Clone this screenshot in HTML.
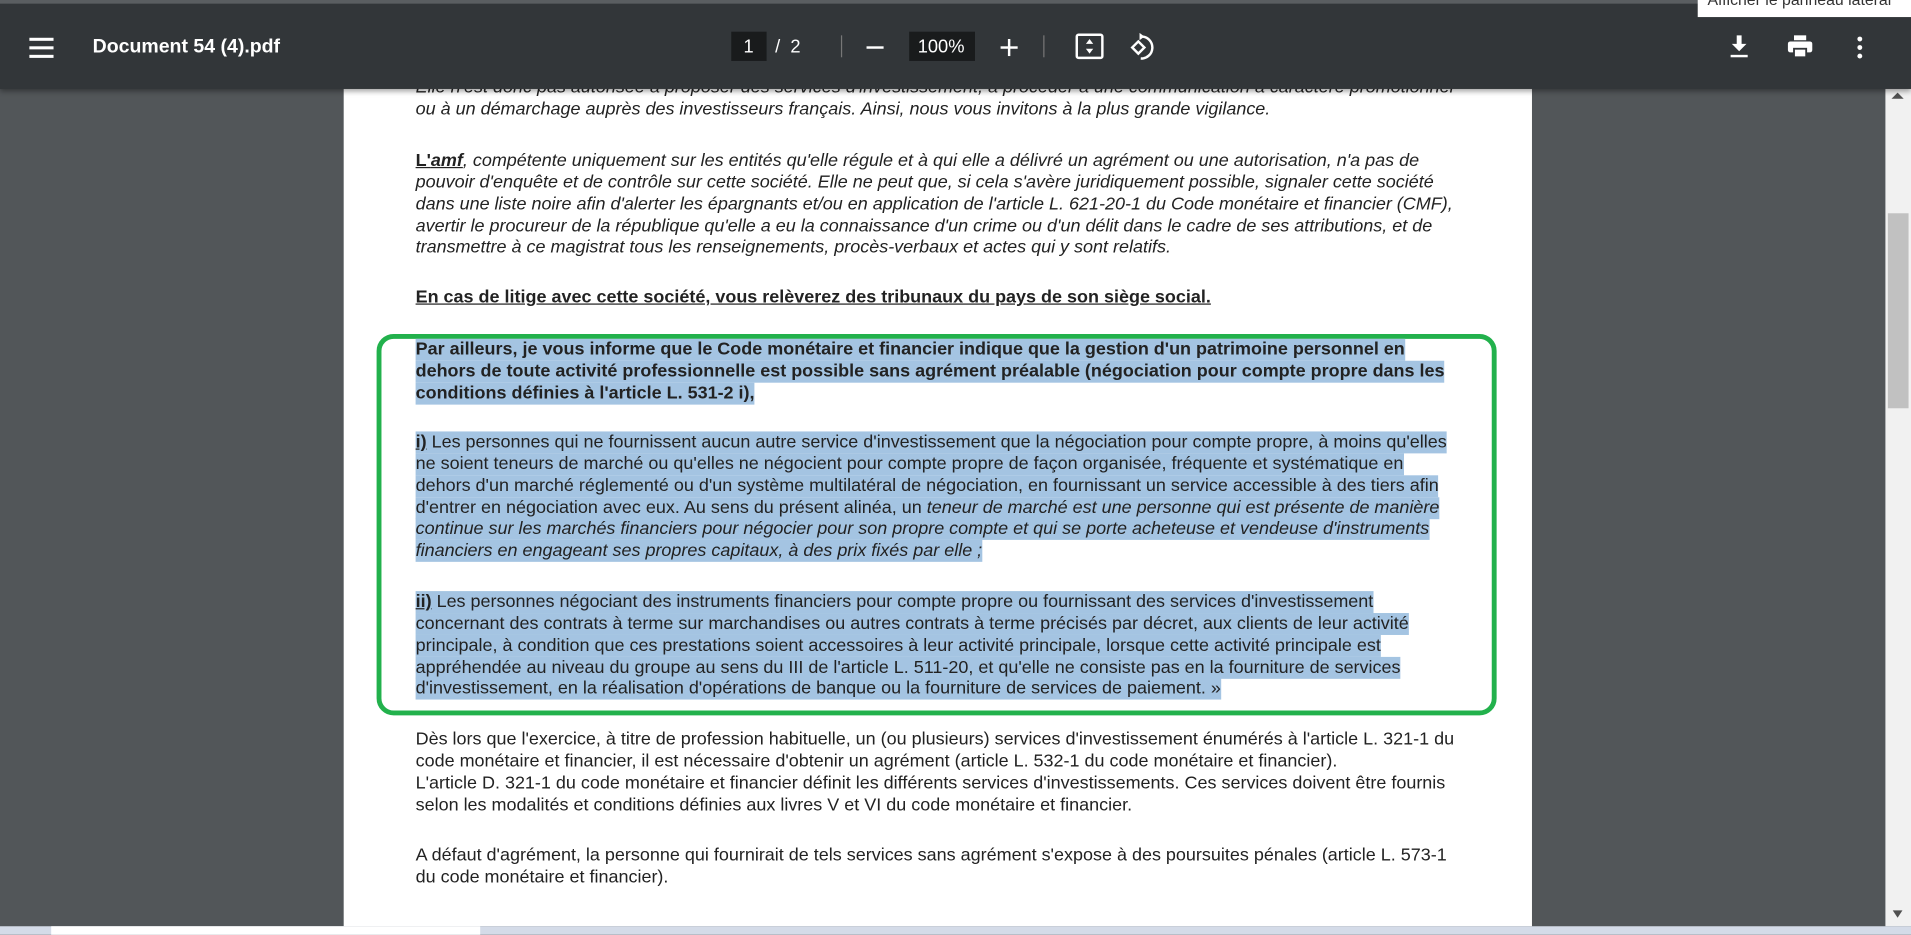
<!DOCTYPE html>
<html><head><meta charset="utf-8"><style>
html,body{margin:0;padding:0;width:1911px;height:935px;overflow:hidden;background:#525659}
#w{position:absolute;left:0;top:0;width:1568px;height:767px;transform:scale(1.21875);transform-origin:0 0;font-family:"Liberation Sans",Arial,sans-serif}
#tb{position:absolute;left:0;top:0;width:1568px;height:73px;background:#323639;box-shadow:0 2px 4px rgba(0,0,0,.35);z-index:5}
#tb .topline{position:absolute;left:0;top:0;width:1568px;height:3px;background:#5a5e61}
.t{position:absolute;color:#fff}
#page{position:absolute;left:282px;top:60px;width:975px;height:700px;background:#fff}
.txt{position:absolute;left:341px;font-size:14.75px;line-height:17.85px;color:#222;white-space:nowrap}
.txt div{height:17.85px}
.hl span{background:#a4c4e2;padding:1px 0}
i{font-style:italic}
b{font-weight:bold}
u{text-decoration:underline}
#green{position:absolute;left:309px;top:274px;width:911px;height:305px;border:4px solid #22b14c;border-radius:14px}
#sb{position:absolute;left:1547px;top:72px;width:21px;height:688px;background:#f1f1f1}
#thumb{position:absolute;left:1549px;top:175px;width:17px;height:160px;background:#c1c1c1}
#bot{position:absolute;left:0;top:760px;width:1568px;height:7px;background:#d4dbe8}
</style></head><body><div id="w">
<div id="page"></div>
<div class="txt" style="top:64px"><i><div>Elle n'est donc pas autorisée à proposer des services d'investissement, à procéder à une communication à caractère promotionnel</div><div>ou à un démarchage auprès des investisseurs français. Ainsi, nous vous invitons à la plus grande vigilance.</div></i></div>
<div class="txt" style="top:124px"><div><b><u>L'<i>amf</i></u></b><i>, co</i><i>mpétente uniquement sur les entités qu'elle régule et à qui elle a délivré un agrément ou une autorisation, n'a pas de</i></div><i><div>pouvoir d'enquête et de contrôle sur cette société. Elle ne peut que, si cela s'avère juridiquement possible, signaler cette société</div><div>dans une liste noire afin d'alerter les épargnants et/ou en application de l'article L. 621-20-1 du Code monétaire et financier (CMF),</div><div>avertir le procureur de la république qu'elle a eu la connaissance d'un crime ou d'un délit dans le cadre de ses attributions, et de</div><div>transmettre à ce magistrat tous les renseignements, procès-verbaux et actes qui y sont relatifs.</div></i></div>
<div class="txt" style="top:236px"><b><u>En cas de litige avec cette société, vous relèverez des tribunaux du pays de son siège social.</u></b></div>
<div id="green"></div>
<div class="txt hl" style="top:279px"><b><div><span>Par ailleurs, je vous informe que le Code monétaire et financier indique que la gestion d'un patrimoine personnel en</span></div><div><span>dehors de toute activité professionnelle est possible sans agrément préalable (négociation pour compte propre dans les</span></div><div><span>conditions définies à l'article L. 531-2 i),</span></div></b></div>
<div class="txt hl" style="top:355px"><div><span><b><u>i)</u></b> Les personnes qui ne fournissent aucun autre service d'investissement que la négociation pour compte propre, à moins qu'elles</span></div><div><span>ne soient teneurs de marché ou qu'elles ne négocient pour compte propre de façon organisée, fréquente et systématique en</span></div><div><span>dehors d'un marché réglementé ou d'un système multilatéral de négociation, en fournissant un service accessible à des tiers afin</span></div><div><span>d'entrer en négociation avec eux. Au sens du présent alinéa, un <i>teneur de marché est une personne qui est présente de manière</i></span></div><div><span><i>continue sur les marchés financiers pour négocier pour son propre compte et qui se porte acheteuse et vendeuse d'instruments</i></span></div><div><span><i>financiers en engageant ses propres capitaux, à des prix fixés par elle ;</i></span></div></div>
<div class="txt hl" style="top:486px"><div><span><b><u>ii)</u></b> Les personnes négociant des instruments financiers pour compte propre ou fournissant des services d'investissement</span></div><div><span>concernant des contrats à terme sur marchandises ou autres contrats à terme précisés par décret, aux clients de leur activité</span></div><div><span>principale, à condition que ces prestations soient accessoires à leur activité principale, lorsque cette activité principale est</span></div><div><span>appréhendée au niveau du groupe au sens du III de l'article L. 511-20, et qu'elle ne consiste pas en la fourniture de services</span></div><div><span>d'investissement, en la réalisation d'opérations de banque ou la fourniture de services de paiement. »</span></div></div>
<div class="txt" style="top:599px"><div>Dès lors que l'exercice, à titre de profession habituelle, un (ou plusieurs) services d'investissement énumérés à l'article L. 321-1 du</div><div>code monétaire et financier, il est nécessaire d'obtenir un agrément (article L. 532-1 du code monétaire et financier).</div><div>L'article D. 321-1 du code monétaire et financier définit les différents services d'investissements. Ces services doivent être fournis</div><div>selon les modalités et conditions définies aux livres V et VI du code monétaire et financier.</div></div>
<div class="txt" style="top:694px"><div>A défaut d'agrément, la personne qui fournirait de tels services sans agrément s'expose à des poursuites pénales (article L. 573-1</div><div>du code monétaire et financier).</div></div>
<div id="sb"></div><div id="thumb"></div>
<div style="position:absolute;left:1552px;top:76px;width:0;height:0;border-left:5px solid transparent;border-right:5px solid transparent;border-bottom:5px solid #505050"></div>
<div style="position:absolute;left:1553px;top:747px;width:0;height:0;border-left:4px solid transparent;border-right:4px solid transparent;border-top:6px solid #505050"></div>
<div id="bot"><div style="position:absolute;left:42px;top:0;width:352px;height:7px;background:#fff"></div></div>
<div id="tb"><div class="topline"></div>
<svg style="position:absolute;left:24px;top:30px" width="20" height="18"><rect x="0" y="1" width="20" height="2.5" fill="#fff"/><rect x="0" y="8" width="20" height="2.5" fill="#fff"/><rect x="0" y="15" width="20" height="2.5" fill="#fff"/></svg>
<div class="t" style="left:76px;top:30px;font-size:16px;font-weight:bold">Document 54 (4).pdf</div>
<div style="position:absolute;left:600px;top:26px;width:29px;height:24px;background:#191b1c"></div>
<div class="t" style="left:610px;top:30px;font-size:15px">1</div>
<div class="t" style="left:636px;top:30px;font-size:15px">/&nbsp; 2</div>
<div style="position:absolute;left:690px;top:29px;width:1px;height:18px;background:#777"></div>
<div style="position:absolute;left:711px;top:38px;width:14px;height:2px;background:#fff"></div>
<div style="position:absolute;left:746px;top:26px;width:54px;height:24px;background:#191b1c"></div>
<div class="t" style="left:753px;top:30px;font-size:15px">100%</div>
<div style="position:absolute;left:821px;top:38px;width:14px;height:2px;background:#fff"></div>
<div style="position:absolute;left:827px;top:32px;width:2px;height:14px;background:#fff"></div>
<div style="position:absolute;left:856px;top:29px;width:1px;height:18px;background:#777"></div>
<svg style="position:absolute;left:882px;top:27px" width="24" height="22"><rect x="1.5" y="1.5" width="21" height="19" rx="1.5" fill="none" stroke="#fff" stroke-width="2"/><path d="M12 5 L9 9 H15Z M12 17 L9 13 H15Z" fill="#fff"/></svg>
<svg style="position:absolute;left:925px;top:26px" width="26" height="26"><path d="M9 8 L4 13 L9 18 L14 13Z" fill="none" stroke="#fff" stroke-width="2"/><path d="M12 4 A9 9 0 1 1 11 22" fill="none" stroke="#fff" stroke-width="2"/><path d="M10 1 L14 4 L10 7Z" fill="#fff"/></svg>
<svg style="position:absolute;left:1418px;top:28px" width="18" height="20"><path d="M7 1 H11 V8 H15 L9 14 L3 8 H7Z" fill="#fff"/><rect x="2" y="17" width="14" height="2" fill="#fff"/></svg>
<svg style="position:absolute;left:1466px;top:28px" width="22" height="20"><rect x="6" y="1" width="10" height="4" fill="#fff"/><rect x="1" y="6" width="20" height="9" rx="2" fill="#fff"/><rect x="6" y="12" width="10" height="7" fill="#fff" stroke="#323639" stroke-width="1.5"/></svg>
<svg style="position:absolute;left:1521px;top:29px" width="10" height="20"><circle cx="5" cy="3" r="2" fill="#fff"/><circle cx="5" cy="10" r="2" fill="#fff"/><circle cx="5" cy="17" r="2" fill="#fff"/></svg>
<div style="position:absolute;left:1393px;top:0;width:175px;height:14px;background:#fff;overflow:hidden"><div style="position:absolute;left:8px;top:-8px;font-size:13px;color:#333;white-space:nowrap">Afficher le panneau latéral</div></div>
</div>
</div></body></html>
